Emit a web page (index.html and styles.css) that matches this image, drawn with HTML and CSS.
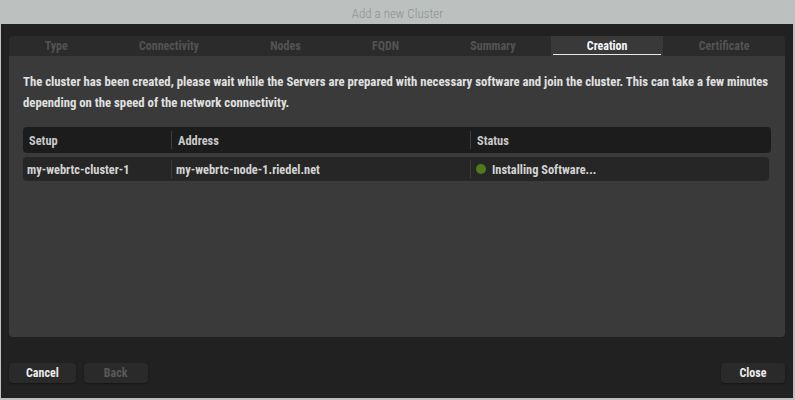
FILE: index.html
```html
<!DOCTYPE html>
<html>
<head>
<meta charset="utf-8">
<link rel="stylesheet" href="styles.css">
</head>
<body>
<div class="window">
  <div class="titlebar">Add a new Cluster</div>
  <div class="dialog">
    <div class="panel">
      <div class="tabs">
        <div class="tab">Type</div>
        <div class="tab">Connectivity</div>
        <div class="tab">Nodes</div>
        <div class="tab">FQDN</div>
        <div class="tab">Summary</div>
        <div class="tab active">Creation</div>
        <div class="tab">Certificate</div>
      </div>
      <div class="content">
        <p class="intro">The cluster has been created, please wait while the Servers are prepared with necessary software and join the cluster. This can take a few minutes depending on the speed of the network connectivity.</p>
        <div class="table">
          <div class="thead">
            <div class="cell c1">Setup</div>
            <div class="cell c2">Address</div>
            <div class="cell c3">Status</div>
          </div>
          <div class="trow">
            <div class="cell c1">my-webrtc-cluster-1</div>
            <div class="cell c2">my-webrtc-node-1.riedel.net</div>
            <div class="cell c3"><span class="dot"></span>Installing Software...</div>
          </div>
        </div>
      </div>
    </div>
    <div class="footer">
      <div class="btn">Cancel</div>
      <div class="btn disabled">Back</div>
      <div class="spacer"></div>
      <div class="btn">Close</div>
    </div>
  </div>
</div>
</body>
</html>
```
FILE: styles.css
```css
html, body {
  margin: 0;
  padding: 0;
  background: #bcc1c0;
  width: 795px;
  height: 400px;
  overflow: hidden;
  font-family: "Roboto Condensed", "Liberation Sans Narrow", "Roboto", sans-serif;
}
.window {
  display: flex;
  flex-direction: column;
  height: 400px;
}
.titlebar {
  height: 24px;
  line-height: 28px;
  text-align: center;
  font-size: 13px;
  color: #8c9190;
  font-weight: 300;
}
.dialog {
  margin: 0 2px 2px 1px;
  background: #212121;
  flex: 1;
  display: flex;
  flex-direction: column;
  padding: 12px 8px 0 8px;
}
.panel {
  height: 301px;
  display: flex;
  flex-direction: column;
  border-radius: 4px;
  overflow: hidden;
}
.tabs {
  height: 20px;
  display: flex;
  background: #2b2b2b;
}
.tab {
  flex: 1 1 auto;
  text-align: center;
  font-size: 12px;
  font-weight: 700;
  color: #535353;
  line-height: 20px;
  position: relative;
}
.tab.active {
  background: #393939;
  color: #f4f6fa;
}
.tab.active::after {
  content: "";
  position: absolute;
  left: 2px;
  right: 2px;
  bottom: 1px;
  height: 1px;
  background: #e8e8e8;
}
.content {
  flex: 1;
  background: #3a3a3a;
  padding: 15px 14px 0 14px;
}
.intro {
  margin: 0;
  font-size: 12.75px;
  line-height: 21px;
  color: #e0e0e0;
  font-weight: 700;
}
.table {
  margin-top: 14px;
  display: flex;
  flex-direction: column;
  gap: 4px;
}
.thead, .trow {
  display: flex;
  align-items: center;
  border-radius: 4px;
}
.thead {
  height: 26px;
  background: #1c1c1c;
  color: #c8c8c8;
}
.trow {
  height: 24px;
  background: #262626;
  color: #d4d4d4;
  margin-right: 2px;
}
.cell {
  font-size: 12.4px;
  font-weight: 700;
  display: flex;
  align-items: center;
  height: 100%;
  box-sizing: border-box;
}
.thead .cell { padding-left: 6px; }
.trow .cell { padding-left: 4px; }
.c1 { width: 148px; }
.c2 { width: 299px; border-left: 1px solid #3c3c3c; }
.c3 { flex: 1; border-left: 1px solid #3c3c3c; }
.thead .c2, .thead .c3 { height: 18px; }
.trow .c2, .trow .c3 { height: 18px; }
.dot {
  width: 10px;
  height: 10px;
  border-radius: 50%;
  background: #4f7a1b;
  margin-right: 6px;
  margin-left: 1px;
}
.footer {
  flex: 1;
  display: flex;
  align-items: flex-start;
  padding-top: 26px;
  gap: 8px;
}
.spacer { flex: 1; }
.btn {
  height: 20px;
  line-height: 20px;
  min-width: 64px;
  padding: 0 17px;
  box-sizing: border-box;
  text-align: center;
  font-size: 12px;
  font-weight: 700;
  color: #ececec;
  background: #2a2a2a;
  border-radius: 4px;
  box-shadow: 0 1px 2px rgba(0,0,0,0.4);
}
.btn.disabled { color: #585858; }
```
